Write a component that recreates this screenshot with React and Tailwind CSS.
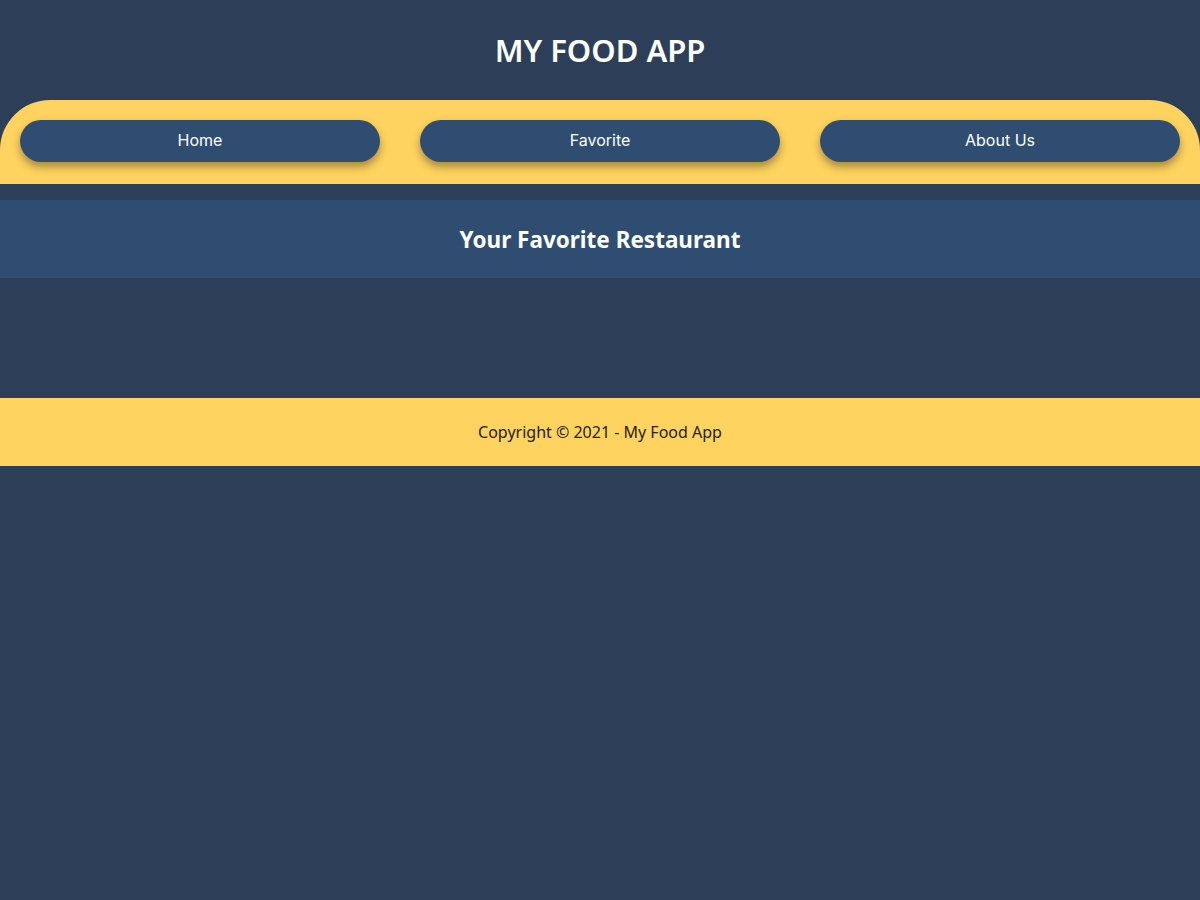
export default function App() {
  return (
    <div className="min-h-[900px] w-full bg-[#2c3e58]" style={{ fontFamily: '"Noto Sans", "Open Sans", sans-serif' }}>
      <header className="flex h-[100px] items-center justify-center">
        <h1 className="text-[31px] font-semibold text-white">MY FOOD APP</h1>
      </header>
      <nav className="flex h-[84px] gap-10 rounded-t-[50px] bg-[#ffd35f] px-5 pt-5">
        {["Home", "Favorite", "About Us"].map((t) => (
          <a
            key={t}
            className="flex h-[42px] flex-1 items-center justify-center rounded-full bg-[#2e4d71] pb-[3px] text-[16px] text-white shadow-[0_5px_8px_rgba(0,0,0,0.35)]"
            style={{ fontFamily: 'Inter, "Liberation Sans", sans-serif' }}
          >
            {t}
          </a>
        ))}
      </nav>
      <main className="mt-4 h-[198px]">
        <section className="flex h-[78px] items-center justify-center bg-[#2e4d71]">
          <h2 className="pt-[2px] text-[22.5px] font-bold text-white">Your Favorite Restaurant</h2>
        </section>
      </main>
      <footer className="flex h-[68px] items-center justify-center bg-[#ffd35f]">
        <p className="text-[16px] text-[#222]">Copyright © 2021 - My Food App</p>
      </footer>
    </div>
  );
}
